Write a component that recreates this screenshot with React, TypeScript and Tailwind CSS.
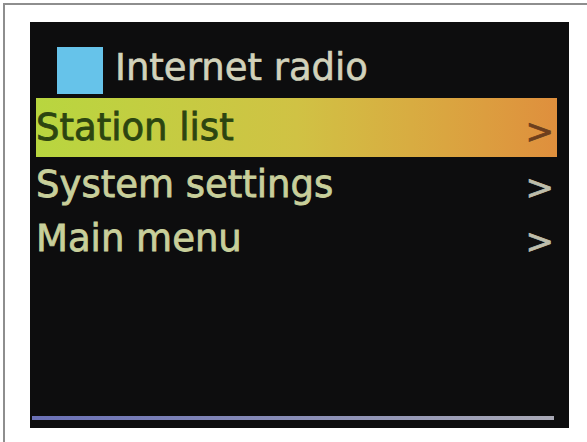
import React from 'react'

const items = [
  { label: 'Station list', selected: true },
  { label: 'System settings', selected: false },
  { label: 'Main menu', selected: false },
]

function MenuRow({ label, selected }: { label: string; selected: boolean }) {
  if (selected) {
    return (
      <div className="flex h-[59px] w-[521px] items-center justify-between bg-gradient-to-r from-[#b8d63f] via-[#d0c244] to-[#df8f3d] pr-[3px]">
        <span className="text-[37px] leading-none text-[#2c4510] [-webkit-text-stroke-width:0.8px]">{label}</span>
        <span className="mt-[6px] text-[34px] leading-none text-[#6e3f1d] [-webkit-text-stroke-width:0.8px]">&gt;</span>
      </div>
    )
  }

  return (
    <div className="flex h-[54px] w-[521px] items-center justify-between pr-[3px]">
      <span className="text-[37px] leading-none text-[#c8cf9b] [-webkit-text-stroke-width:0.8px]">{label}</span>
      <span className="mt-[6px] text-[34px] leading-none text-[#bdbdab] [-webkit-text-stroke-width:0.8px]">&gt;</span>
    </div>
  )
}

export default function App() {
  return (
    <div
      className="h-[442px] w-[587px] overflow-hidden bg-white pl-[3px] pt-[3px]"
      style={{ fontFamily: '"DejaVu Sans", Verdana, sans-serif' }}
    >
      <div className="h-full w-full border-l-2 border-t-2 border-[#8e8e8e] pl-[25px] pt-[17px]">
        <div className="flex h-[406px] w-[539px] flex-col bg-[#0d0d0e]">
          <div className="flex h-[76px] items-center gap-[12px] pl-[27px] pt-[21px]">
            <div className="h-[47px] w-[46px] bg-[#66c3ea]" />
            <span className="mb-[6px] text-[37px] leading-none text-[#d2d2bb] [-webkit-text-stroke-width:0.6px]">
              Internet radio
            </span>
          </div>

          <div className="flex flex-col pl-[6px]">
            {items.map((item) => (
              <MenuRow key={item.label} label={item.label} selected={item.selected} />
            ))}
          </div>

          <div className="mb-[8px] ml-[2px] mt-auto h-[4px] w-[522px] bg-gradient-to-r from-[#6a70b6] to-[#a9a9b6]" />
        </div>
      </div>
    </div>
  )
}
